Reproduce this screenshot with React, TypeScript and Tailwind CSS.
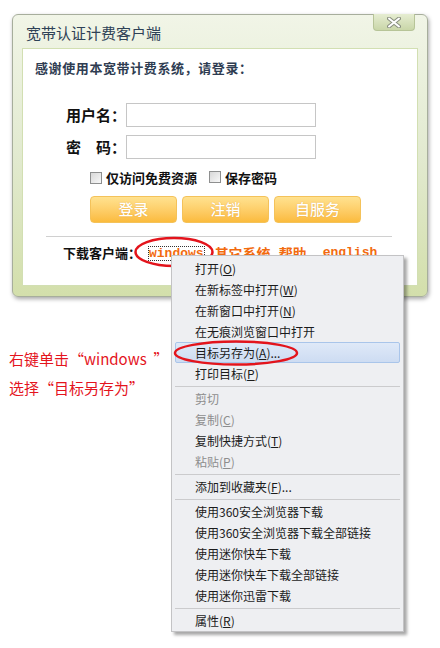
import React from "react";

type MenuEntry =
  | "sep"
  | { label: string; hotkey?: string; suffix?: string; disabled?: boolean; active?: boolean };

const menuItems: MenuEntry[] = [
  { label: "打开", hotkey: "O" },
  { label: "在新标签中打开", hotkey: "W" },
  { label: "在新窗口中打开", hotkey: "N" },
  { label: "在无痕浏览窗口中打开" },
  { label: "目标另存为", hotkey: "A", suffix: "...", active: true },
  { label: "打印目标", hotkey: "P" },
  "sep",
  { label: "剪切", disabled: true },
  { label: "复制", hotkey: "C", disabled: true },
  { label: "复制快捷方式", hotkey: "T" },
  { label: "粘贴", hotkey: "P", disabled: true },
  "sep",
  { label: "添加到收藏夹", hotkey: "F", suffix: "..." },
  "sep",
  { label: "使用360安全浏览器下载" },
  { label: "使用360安全浏览器下载全部链接" },
  { label: "使用迷你快车下载" },
  { label: "使用迷你快车下载全部链接" },
  { label: "使用迷你迅雷下载" },
  "sep",
  { label: "属性", hotkey: "R" },
];

function Checkbox() {
  return (
    <span className="inline-block h-[12px] w-[12px] border border-[#8e8f8f] bg-gradient-to-br from-[#d8d8d8] to-[#f8f8f8]" />
  );
}

function OrangeButton({ children }: { children: React.ReactNode }) {
  return (
    <button className="flex h-[27px] w-[87px] items-center justify-center rounded-[4px] border border-[#f4c25a] bg-gradient-to-b from-[#ffe28f] to-[#fbbb3c] text-[15px] font-medium text-white [text-shadow:0_0_1px_rgba(200,120,0,0.6)]">
      {children}
    </button>
  );
}

function ContextMenu() {
  return (
    <div className="absolute left-[171px] top-[255px] z-20 h-[377px] w-[233px] border border-[#c3c3c5] bg-[#eeeff2] pt-[2px] text-[12px] shadow-[3px_3px_3px_rgba(0,0,0,0.35)]">
      {menuItems.map((item, i) => {
        if (item === "sep") {
          return (
            <div key={i} className="flex h-[4px] items-center px-[3px]">
              <div className="h-px w-full bg-[#cbcbcd]" />
            </div>
          );
        }
        const color = item.disabled ? "text-[#8d8d8d]" : "text-[#1b1b1b]";
        const box = item.active
          ? "mx-[3px] rounded-[2px] border border-[#a9c5ea] bg-gradient-to-b from-[#dfe9f8] to-[#cddcf2] pl-[19px]"
          : "pl-[23px]";
        return (
          <div key={i} className={`flex h-[21px] items-center ${box} ${color}`}>
            {item.label}
            {item.hotkey && (
              <>
                (<span className="underline">{item.hotkey}</span>)
              </>
            )}
            {item.suffix}
          </div>
        );
      })}
    </div>
  );
}

export default function App() {
  return (
    <div className="relative h-[648px] w-[440px] overflow-hidden bg-white font-['Noto_Sans_CJK_SC','Noto_Sans',sans-serif]">
      {/* client window */}
      <div className="ml-[12px] mt-[14px] flex h-[283px] w-[416px] flex-col rounded-[6px] border border-[#a7ae9c] bg-gradient-to-b from-[#f1f5e7] via-[#e2ead0] to-[#d3dfab] shadow-[1px_2px_4px_rgba(0,0,0,0.35)]">
        <div className="flex h-[33px] items-start justify-between">
          <div className="ml-[13px] mt-[8px] text-[15px] leading-[20px] text-[#2e4156]">宽带认证计费客户端</div>
          <div className="mr-[12px] -mt-[1px] flex h-[17px] w-[42px] items-center justify-center rounded-b-[4px] border border-t-0 border-[#b7c498] bg-gradient-to-b from-[#e6edd2] to-[#c9d6a8]">
            <svg width="14" height="11" viewBox="0 0 14 11">
              <path d="M2 1.5 L12 9.5 M12 1.5 L2 9.5" stroke="#8a9080" strokeWidth="4" strokeLinecap="round" />
              <path d="M2 1.5 L12 9.5 M12 1.5 L2 9.5" stroke="#ffffff" strokeWidth="2" strokeLinecap="round" />
            </svg>
          </div>
        </div>

        <div className="ml-[9px] flex h-[238px] w-[396px] flex-col border border-[#d2dfb2] bg-white pt-[9px]">
          <div className="ml-[12px] text-[13px] font-bold leading-[20px] tracking-[0.6px] text-[#2f3d52]">
            感谢使用本宽带计费系统，请登录：
          </div>

          <div className="ml-[43px] mt-[25px] flex h-[24px] items-center">
            <span className="w-[60px] text-[15px] font-bold text-[#111]">用户名：</span>
            <div className="h-[24px] w-[190px] border border-[#c6c6c6] bg-white" />
          </div>
          <div className="ml-[43px] mt-[8px] flex h-[24px] items-center">
            <span className="w-[60px] text-[15px] font-bold text-[#111]">密　码：</span>
            <div className="h-[24px] w-[190px] border border-[#c6c6c6] bg-white" />
          </div>

          <div className="ml-[67px] mt-[11px] flex h-[16px] items-center text-[13px] font-bold text-[#111]">
            <Checkbox />
            <span className="ml-[4px]">仅访问免费资源</span>
            <span className="ml-[12px]">
              <Checkbox />
            </span>
            <span className="ml-[4px]">保存密码</span>
          </div>

          <div className="ml-[67px] mt-[10px] flex gap-[5px]">
            <OrangeButton>登录</OrangeButton>
            <OrangeButton>注销</OrangeButton>
            <OrangeButton>自服务</OrangeButton>
          </div>

          <div className="ml-[23px] mt-[13px] h-px w-[346px] bg-[#d0d0d0]" />

          <div className="ml-[40px] mt-[8px] flex h-[16px] items-center text-[13px] font-bold">
            <span className="text-[#111]">下载客户端：</span>
            <span className="ml-[7px] border border-dotted border-[#333] font-['Liberation_Mono',monospace] leading-[13px] text-[#f26b0f]">
              windows
            </span>
            <span className="ml-[10px] text-[14px] text-[#f26b0f]">其它系统</span>
            <span className="ml-[8px] text-[14px] text-[#f26b0f]">帮助</span>
            <span className="ml-[16px] font-['Liberation_Mono',monospace] text-[#f26b0f]">english</span>
          </div>
        </div>
      </div>

      {/* annotation */}
      <div className="ml-[9px] mt-[47px] text-[15px] leading-[29px] text-[#e4141d]">
        <div>右键单击“windows&nbsp;&nbsp;”</div>
        <div>选择“目标另存为”</div>
      </div>

      <svg className="pointer-events-none absolute left-0 top-0 z-10" width="440" height="648">
        <ellipse cx="174" cy="252" rx="38.5" ry="14" fill="none" stroke="#e3141c" strokeWidth="2.5" />
      </svg>

      <ContextMenu />

      <svg className="pointer-events-none absolute left-0 top-0 z-30" width="440" height="648">
        <ellipse cx="236" cy="353" rx="61" ry="11.5" fill="none" stroke="#e3141c" strokeWidth="2.5" />
      </svg>
    </div>
  );
}
